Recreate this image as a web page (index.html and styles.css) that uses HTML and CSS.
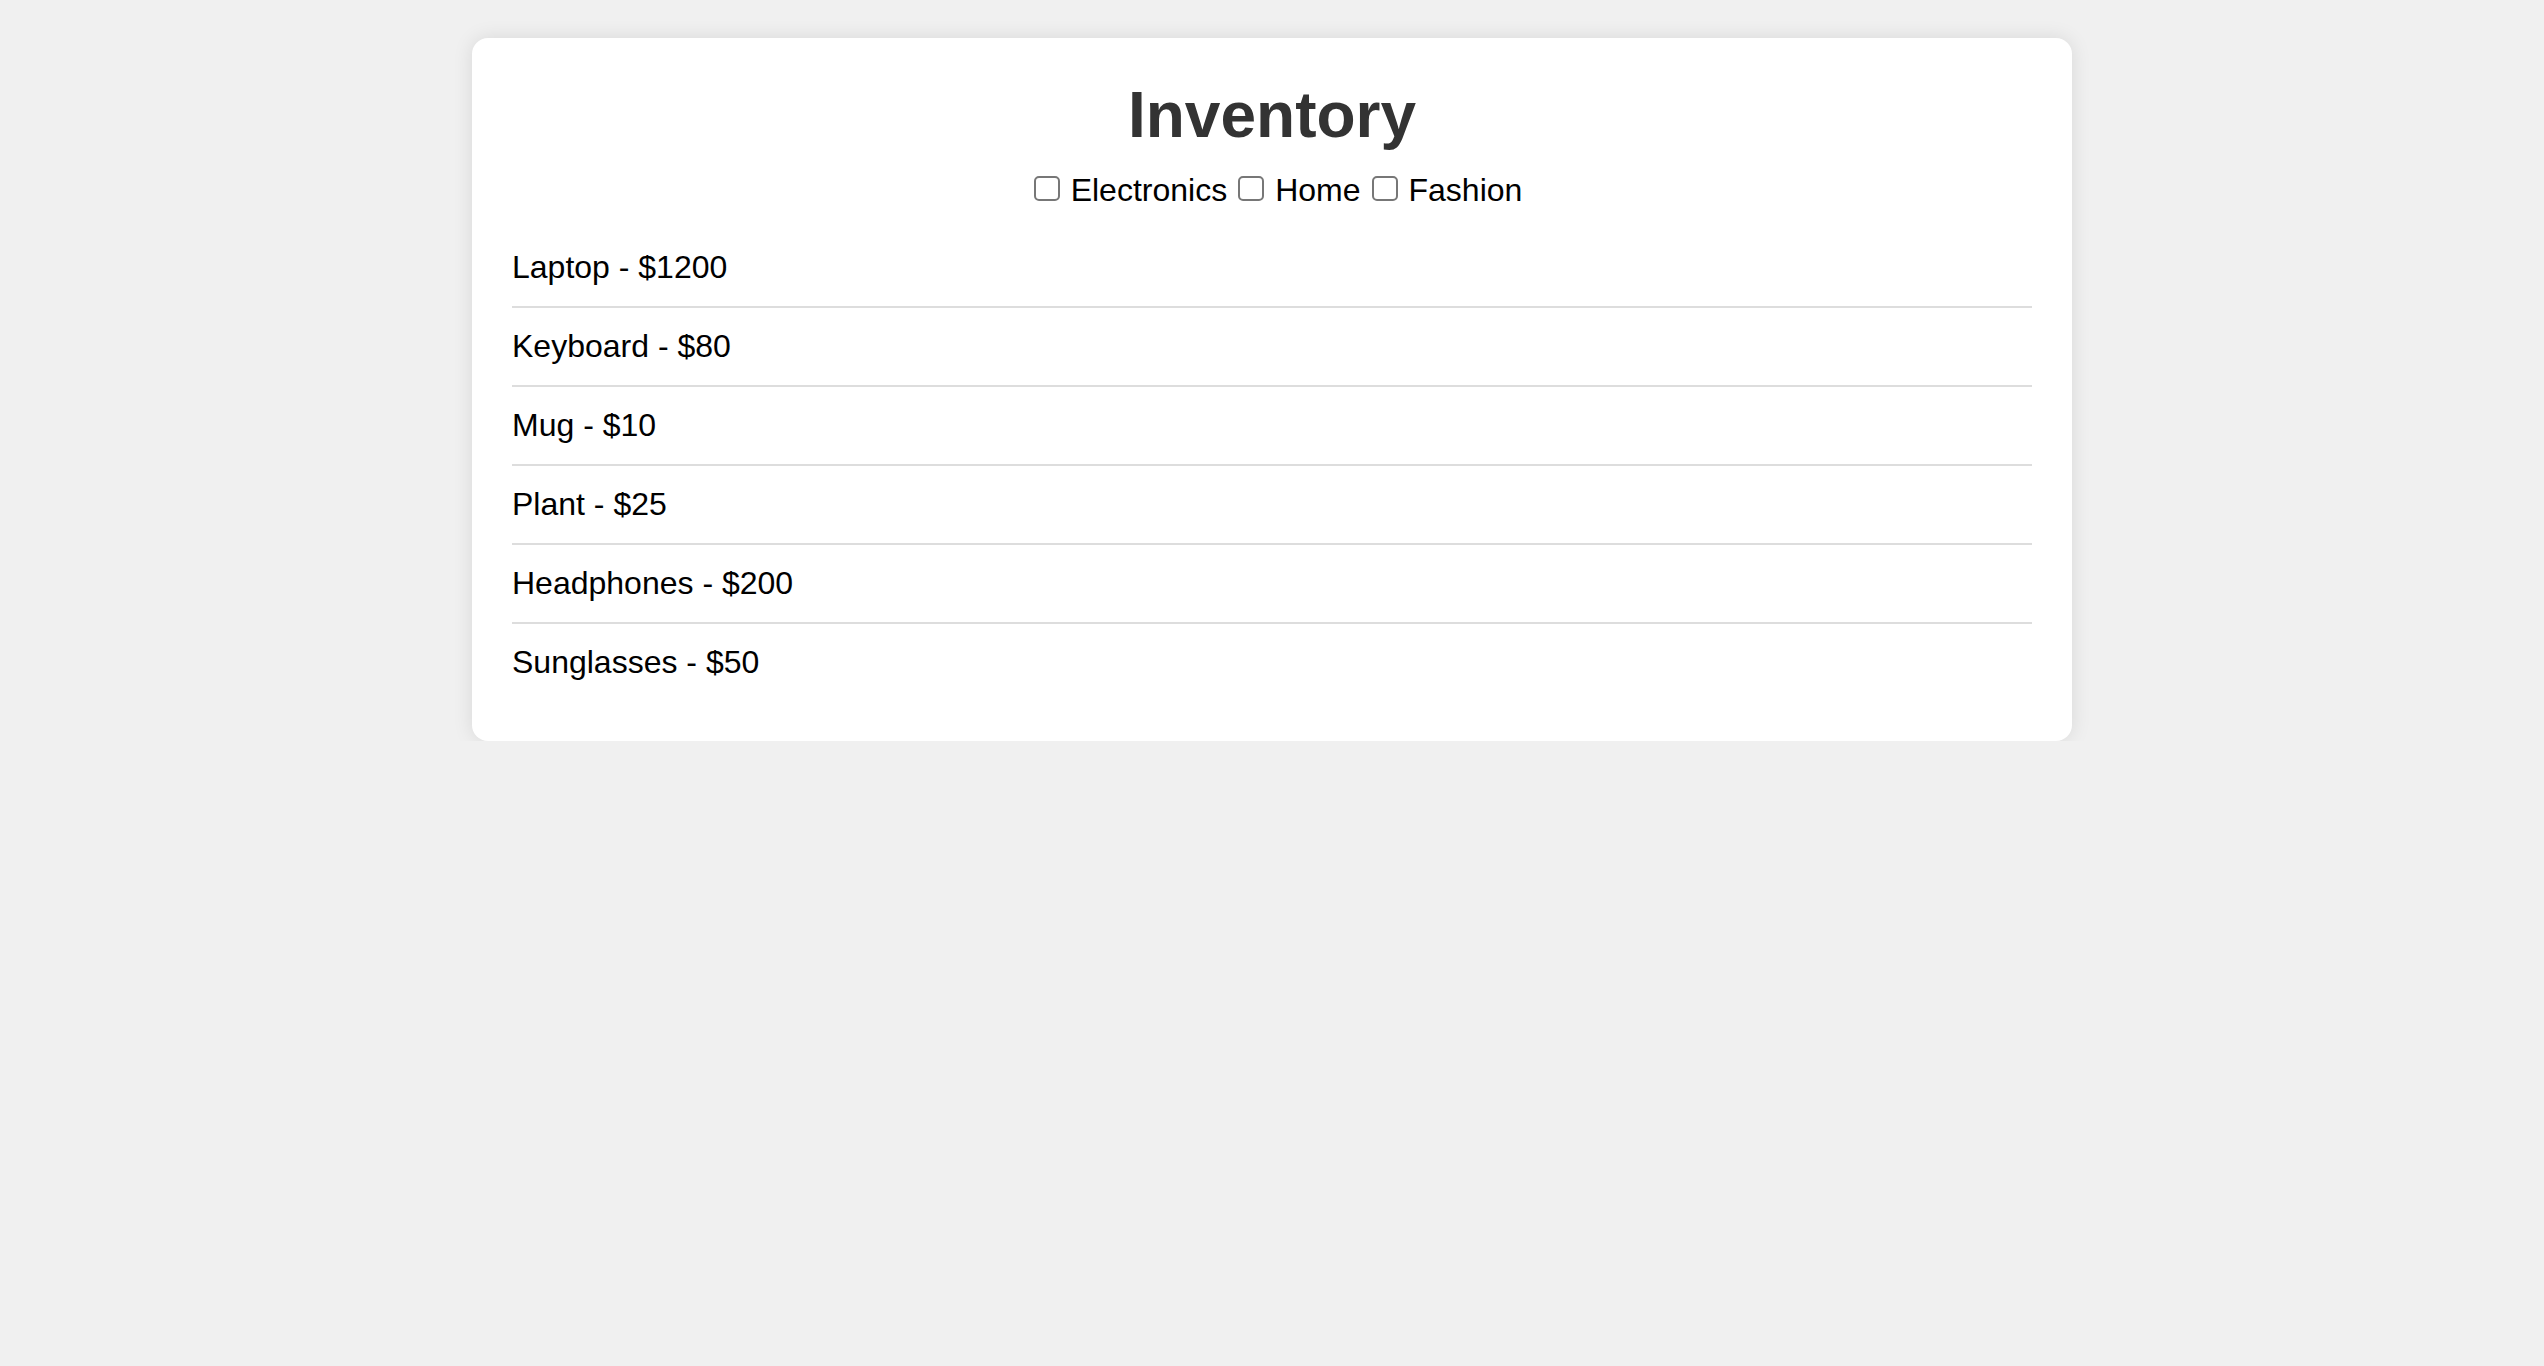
FILE: index.html
```html
<!DOCTYPE html>
<html lang="en">
<head>
<meta charset="utf-8">
<title>Inventory</title>
<link rel="stylesheet" href="styles.css">
</head>
<body>
<div class="card">
  <h1 class="title">Inventory</h1>
  <div class="filters">
    <label class="filter"><input type="checkbox" class="check">Electronics</label>
    <label class="filter"><input type="checkbox" class="check">Home</label>
    <label class="filter"><input type="checkbox" class="check">Fashion</label>
  </div>
  <ul class="items">
    <li class="item">Laptop - $1200</li>
    <li class="item">Keyboard - $80</li>
    <li class="item">Mug - $10</li>
    <li class="item">Plant - $25</li>
    <li class="item">Headphones - $200</li>
    <li class="item">Sunglasses - $50</li>
  </ul>
</div>
</body>
</html>
```

FILE: styles.css
```css
html, body {
  margin: 0;
  padding: 0;
}
body {
  background: #f0f0f0;
  font-family: "Liberation Sans", Arial, sans-serif;
  font-size: 32px;
  color: #000;
  padding-top: 38px;
}
.card {
  box-sizing: border-box;
  width: 1600px;
  margin: 0 auto;
  background: #fff;
  border-radius: 16px;
  box-shadow: 0 0 20px rgba(0, 0, 0, 0.1);
  padding: 40px;
}
.title {
  margin: 0 0 20px;
  text-align: center;
  font-size: 64px;
  font-weight: bold;
  color: #333;
}
.filters {
  display: flex;
  justify-content: center;
  align-items: baseline;
  gap: 11px;
  margin-bottom: 20px;
  padding-left: 12px;
}
.filter {
  display: inline-flex;
  align-items: baseline;
  gap: 11px;
  font-size: 32px;
}
.check {
  -webkit-appearance: none;
  appearance: none;
  box-sizing: border-box;
  width: 26px;
  height: 25px;
  margin: 0;
  border: 2px solid #777;
  border-radius: 5px;
  background: #fff;
}
.items {
  list-style: none;
  margin: 0;
  padding: 0;
}
.item {
  padding: 20px 0;
  border-bottom: 2px solid #ddd;
}
.item:last-child {
  border-bottom: none;
}
```
